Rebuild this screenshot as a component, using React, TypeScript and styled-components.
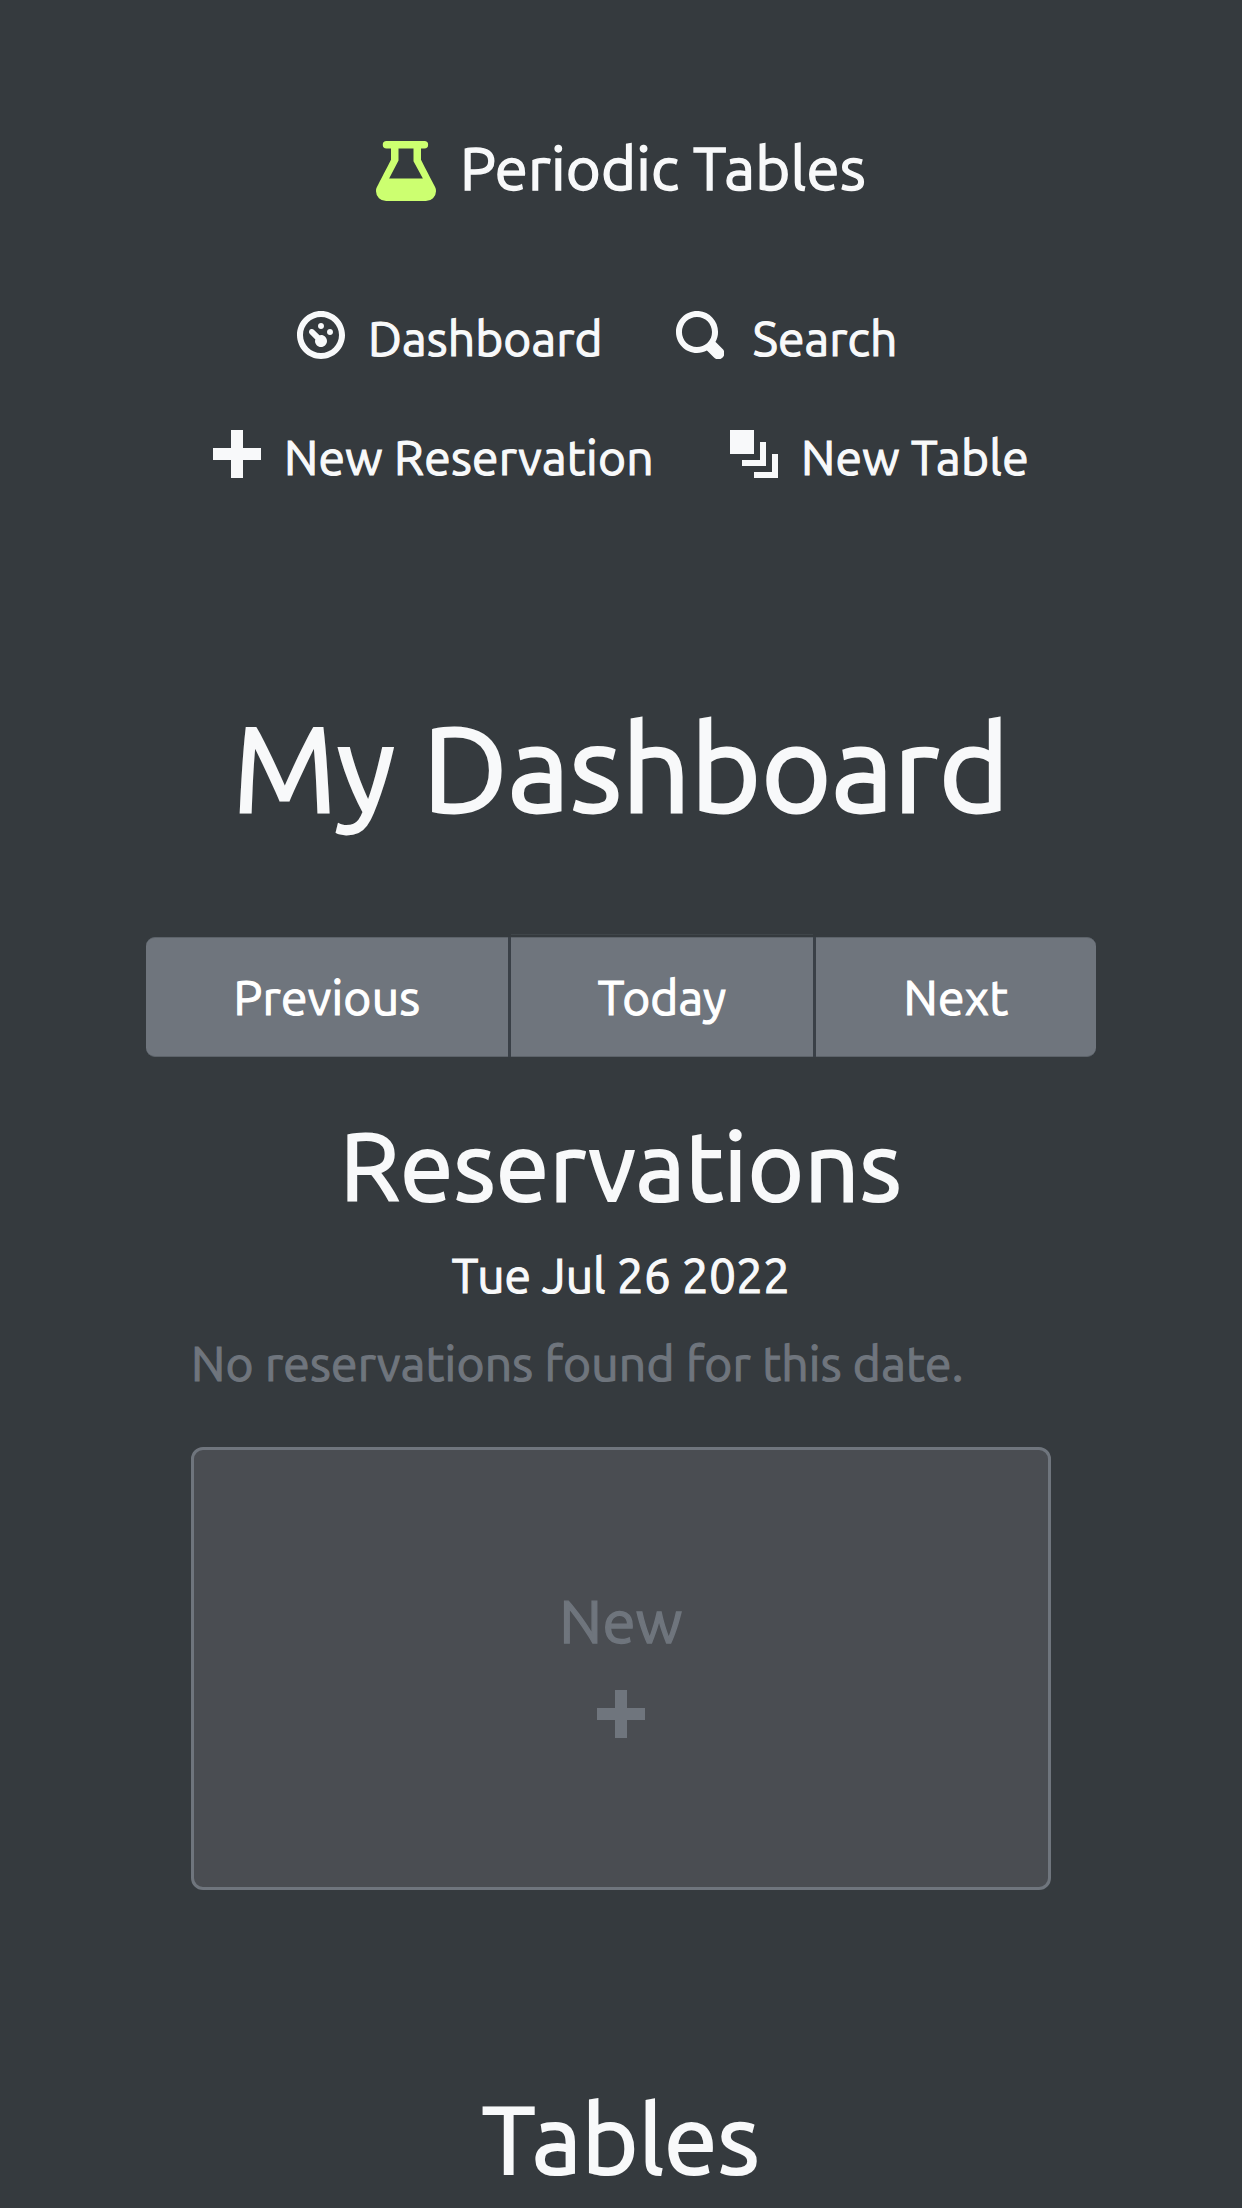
import React from 'react';
import styled, { createGlobalStyle } from 'styled-components';

const GlobalStyle = createGlobalStyle`
  * { box-sizing: border-box; }
  html, body { margin: 0; background: #353a3e; }
  body {
    color: #f8f9fa;
    font-family: Ubuntu, "Noto Sans", sans-serif;
    font-size: 48px;
    font-weight: 400;
    line-height: 72px;
  }
  body * {
    letter-spacing: 0.0055em;
    -webkit-text-stroke: 0.023em currentColor;
  }
`;

const Page = styled.div`
  display: flex;
  flex-direction: column;
  align-items: center;
  width: 1242px;
  height: 2208px;
  padding-top: 122px;
  overflow: hidden;
  background: #353a3e;
`;

const Brand = styled.div`
  display: flex;
  align-items: center;
  gap: 24px;
  height: 92px;
  font-size: 60px;
  line-height: 92px;
  white-space: nowrap;

  && span { letter-spacing: 0.003em; }
`;

const Icon = styled.svg<{ $size?: number }>`
  display: block;
  flex: none;
  width: ${(p) => p.$size ?? 48}px;
  height: ${(p) => p.$size ?? 48}px;
  fill: currentColor;
`;

const BrandIcon = styled(Icon)`
  color: #ccff70;
  margin-top: 5px;
`;

const Nav = styled.nav`
  display: flex;
  flex-direction: column;
  gap: 47px;
  width: 100%;
  margin-top: 88px;
`;

const NavRow = styled.div<{ $start: number; $gap: number }>`
  display: flex;
  gap: ${(p) => p.$gap}px;
  padding-left: ${(p) => p.$start}px;
`;

const NavLink = styled.a<{ $gap?: number; $tight?: boolean }>`
  display: flex;
  align-items: flex-start;
  gap: ${(p) => p.$gap ?? 23}px;
  height: 72px;
  color: #f8f9fa;
  white-space: nowrap;

  && { letter-spacing: ${(p) => (p.$tight ? '0.002em' : '0.0055em')}; }
  svg { margin-top: 9px; }
`;

const Title = styled.h1`
  margin: 203px 0 0;
  font-size: 120px;
  font-weight: 400;
  line-height: 144px;

  && { letter-spacing: 0.002em; }
`;

const ButtonGroup = styled.div`
  display: grid;
  grid-template-columns: 362px 302px 280px;
  column-gap: 3px;
  height: 120px;
  margin-top: 97px;
  border-radius: 9px;
  background: #3a4047;
`;

const Button = styled.button<{ $side?: 'left' | 'right'; $tight?: boolean }>`
  padding: 0 0 1px;
  border: solid #5d636a;
  border-width: 1px 0;
  border-radius: ${(p) => (p.$side === 'left' ? '9px 0 0 9px' : p.$side === 'right' ? '0 9px 9px 0' : '0')};
  box-shadow: ${(p) => (p.$side ? 'none' : '0 -2px 0 #353a3e, 0 -3px 0 #3f4549')};
  background: #6f757d;
  color: #fff;
  font: inherit;

  && { letter-spacing: ${(p) => (p.$tight ? '0' : '0.0055em')}; }
`;

const Heading = styled.h2<{ $top: number }>`
  margin: ${(p) => p.$top}px 0 0;
  font-size: 96px;
  font-weight: 400;
  line-height: 115px;
`;

const DateLine = styled.p`
  && {
    margin: 16px 0 0;
    letter-spacing: 0;
  }
`;

const Column = styled.section`
  width: 860px;
  margin-top: 16px;
`;

const Empty = styled.p`
  margin: 0;
  color: #6f757d;
  white-space: nowrap;

  && { letter-spacing: 0.004em; }
`;

const NewCard = styled.div`
  display: flex;
  flex-direction: column;
  align-items: center;
  height: 443px;
  margin-top: 48px;
  padding-top: 135px;
  border: 3px solid #6f757d;
  border-radius: 12px;
  background: #4a4d52;
  color: #6f757d;
`;

const CardTitle = styled.div`
  margin-bottom: 33px;
  font-size: 60px;
  line-height: 72px;
`;

const PLUS = 'M3 0v3h-3v2h3v3h2v-3h3v-2h-3v-3h-2z';
const DASHBOARD =
  'M4 0c-2.2 0-4 1.8-4 4s1.8 4 4 4 4-1.8 4-4-1.8-4-4-4zm0 1c1.66 0 3 1.34 3 3s-1.34 3-3 3-3-1.34-3-3 1.34-3 3-3zm0 1c-.28 0-.5.22-.5.5s.22.5.5.5.5-.22.5-.5-.22-.5-.5-.5zm-1.66 1a.5.5 0 0 0-.19.84l.91.91c-.02.08-.06.16-.06.25 0 .55.45 1 1 1s1-.45 1-1-.45-1-1-1c-.09 0-.17.04-.25.06l-.91-.91a.5.5 0 0 0-.44-.16.5.5 0 0 0-.06 0zm3.16 0c-.28 0-.5.22-.5.5s.22.5.5.5.5-.22.5-.5-.22-.5-.5-.5z';
const SEARCH =
  'M3.5 0c-1.93 0-3.5 1.57-3.5 3.5s1.57 3.5 3.5 3.5c.59 0 1.17-.14 1.66-.41a1 1 0 0 0 .13.13l1 1a1.02 1.02 0 1 0 1.44-1.44l-1-1a1 1 0 0 0-.16-.13c.27-.49.44-1.06.44-1.66 0-1.93-1.55-3.5-3.5-3.5zm0 1c1.39 0 2.5 1.11 2.5 2.5 0 .66-.24 1.27-.66 1.72-.01.01-.02.02-.03.03a1 1 0 0 0-.13.13c-.44.4-1.04.63-1.69.63-1.39 0-2.5-1.11-2.5-2.5s1.11-2.5 2.5-2.5z';
const LAYERS = 'M0 0v4h4v-4h-4zm5 2v3h-3v1h4v-4h-1zm2 2v3h-3v1h4v-4h-1z';
const BEAKER =
  'M1.4 0a.5.5 0 0 0 0 1h.6v1.5c-.25.5-1.1 2.15-1.7 3.3-.22.4-.3.5-.3.9a1.35 1.3 0 0 0 1.35 1.3h5.3a1.35 1.3 0 0 0 1.35-1.3c0-.4-.08-.5-.3-.9-.6-1.15-1.45-2.8-1.7-3.3v-1.5h.45a.5.5 0 0 0 0-1zM3 1h2v1.7l1.25 2.3h-4.5l1.2-2.3.05-.1z';

type GlyphProps = { d: string; size?: number };
const Glyph = ({ d, size }: GlyphProps) => (
  <Icon $size={size} viewBox="0 0 8 8" aria-hidden="true">
    <path d={d} />
  </Icon>
);

export default function App() {
  return (
    <>
      <GlobalStyle />
      <Page>
        <Brand>
          <BrandIcon $size={60} viewBox="0 0 8 8" aria-hidden="true">
            <path d={BEAKER} fillRule="evenodd" />
          </BrandIcon>
          <span>Periodic Tables</span>
        </Brand>
        <Nav>
          <NavRow $start={297} $gap={73}>
            <NavLink $tight><Glyph d={DASHBOARD} />Dashboard</NavLink>
            <NavLink $gap={29} $tight><Glyph d={SEARCH} />Search</NavLink>
          </NavRow>
          <NavRow $start={213} $gap={76}>
            <NavLink><Glyph d={PLUS} />New Reservation</NavLink>
            <NavLink><Glyph d={LAYERS} />New Table</NavLink>
          </NavRow>
        </Nav>
        <Title>My Dashboard</Title>
        <ButtonGroup>
          <Button $side="left">Previous</Button>
          <Button $tight>Today</Button>
          <Button $side="right">Next</Button>
        </ButtonGroup>
        <Heading $top={51}>Reservations</Heading>
        <DateLine>Tue Jul 26 2022</DateLine>
        <Column>
          <Empty>No reservations found for this date.</Empty>
          <NewCard>
            <CardTitle>New</CardTitle>
            <Glyph d={PLUS} />
          </NewCard>
        </Column>
        <Heading $top={191}>Tables</Heading>
      </Page>
    </>
  );
}
